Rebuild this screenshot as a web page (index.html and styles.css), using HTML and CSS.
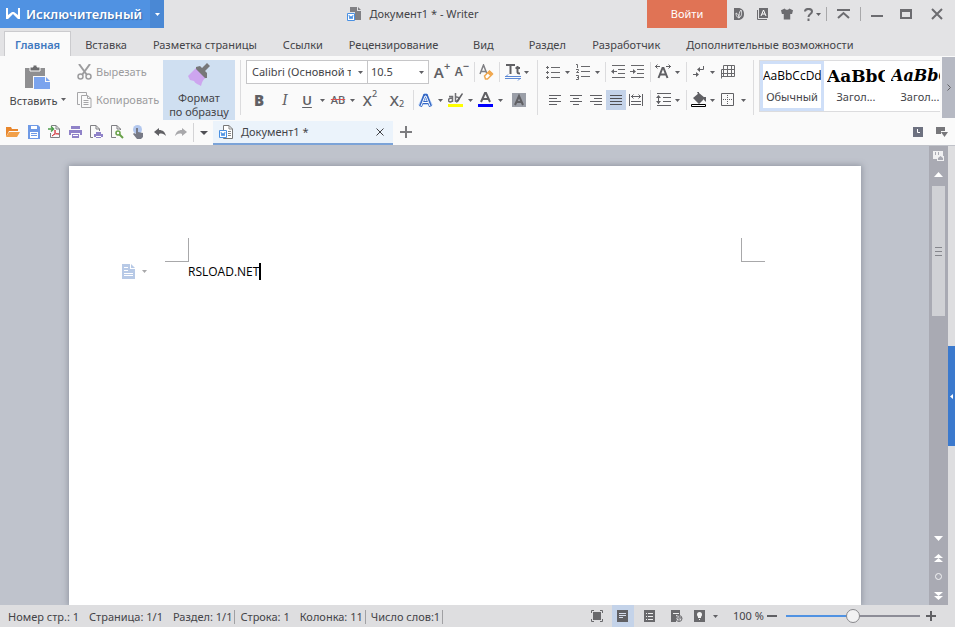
FILE: index.html
```html
<!DOCTYPE html>
<html lang="ru">
<head>
<meta charset="utf-8">
<title>Документ1 * - Writer</title>
<link rel="stylesheet" href="styles.css">
</head>
<body>
<svg class="sprite" aria-hidden="true">
  <symbol id="caret" viewBox="0 0 5 3"><path d="M0 0h5L2.500 3z"/></symbol>
  <symbol id="doc-w" viewBox="0 0 14 14"><path d="M4.500.5H10L13.500 4v9.500H4.500z" fill="#fff" stroke="#777"/><path d="M10 .5V4h3.500M9 6.500h3M9 8.500h3M9 10.500h3" stroke="#888" fill="none"/><path d="M.5 5.500h7v7h-7z" fill="#fff" stroke="#4a90e2"/><path d="M2 7l1 4 1-3 1 3 1-4" stroke="#4a90e2" fill="none"/></symbol>
</svg>

<header class="titlebar">
  <div class="brand">
    <button class="brand-main"><svg width="16" height="12" viewBox="0 0 16 12"><path d="M1 0h2v7l4-3h2l4 3V0h2v11h-2L8 6l-5 5H1z" fill="#fff"/></svg>Исключительный</button>
    <button class="brand-more" aria-label="Меню"><svg class="caret"><use href="#caret"/></svg></button>
  </div>
  <div class="doc-title">
    <svg width="15" height="14" viewBox="0 0 15 14"><path d="M3 0h7v4h4v9H8V5H3z" fill="#808084"/><path d="M11 0l3 3h-3z" fill="#808084"/><path d="M.5 6.500h7v7h-7z" fill="#fff" stroke="#4a90e2"/><path d="M2 8l1 4 1-3 1 3 1-4" stroke="#4a90e2" fill="none"/></svg>
    <span>Документ1 * - Writer</span>
  </div>
  <button class="login">Войти</button>
  <div class="window-tools">
    <button aria-label="Docer"><svg width="10" height="12" viewBox="0 0 10 12"><path d="M0 0h4c4 0 6 2.500 6 6s-2 6-6 6H0z" fill="#6c6c70"/><path d="M5 10C2 9 2 6 2 5c2 1 3 2 3 5 0-3 0-6 2-8 1 3 1 6-2 8" fill="none" stroke="#e3e3e5"/></svg></button>
    <button aria-label="Шрифты"><svg width="12" height="12" viewBox="0 0 12 12"><path d="M2 0h9v10H2z" fill="#6c6c70"/><path d="M.5 2v9.500H10" fill="none" stroke="#6c6c70"/><path d="M4 8l2.500-6L9 8M5 6h3" fill="none" stroke="#fff"/></svg></button>
    <button aria-label="Оформление"><svg width="12" height="12" viewBox="0 0 13 12"><path d="M4 0c1 2 4 2 5 0l4 2-1 4h-2v6H3V6H1L0 2z" fill="#6c6c70"/></svg></button>
    <button class="help" aria-label="Справка"><svg width="9" height="13" viewBox="0 0 9 13"><path d="M1 3.500C1 0 8 0 8 3.500 8 6 4.500 6 4.500 9" fill="none" stroke="#6c6c70" stroke-width="2"/><path d="M3.500 10.500h2V13h-2z" fill="#6c6c70"/></svg><svg class="caret"><use href="#caret"/></svg></button>
    <i class="bar"></i>
    <button aria-label="Свернуть ленту"><svg width="13" height="10" viewBox="0 0 13 10"><path d="M0 1h13M1 9l5.500-5L12 9" fill="none" stroke="#6c6c70" stroke-width="2"/></svg></button>
    <i class="bar"></i>
    <button aria-label="Свернуть"><svg width="12" height="10" viewBox="0 0 12 10"><path d="M0 7h12" stroke="#6c6c70" stroke-width="2"/></svg></button>
    <button aria-label="Развернуть"><svg width="12" height="10" viewBox="0 0 12 10"><path d="M1 1h10v8H1z" fill="none" stroke="#6c6c70" stroke-width="2"/><path d="M0 0h12v3H0z" fill="#6c6c70"/></svg></button>
    <button aria-label="Закрыть"><svg width="12" height="12" viewBox="0 0 12 12"><path d="M1 1l10 10M11 1L1 11" stroke="#6c6c70" stroke-width="2"/></svg></button>
  </div>
</header>

<nav class="tabs">
  <a class="tab active" href="#">Главная</a>
  <a class="tab" href="#">Вставка</a>
  <a class="tab" href="#">Разметка страницы</a>
  <a class="tab" href="#">Ссылки</a>
  <a class="tab" href="#">Рецензирование</a>
  <a class="tab" href="#">Вид</a>
  <a class="tab" href="#">Раздел</a>
  <a class="tab" href="#">Разработчик</a>
  <a class="tab" href="#">Дополнительные возможности</a>
</nav>

<section class="ribbon">
  <button class="paste">
    <svg width="26" height="24" viewBox="0 0 26 24"><path d="M0 3h20v8H8v12H0z" fill="#8f8f91"/><path d="M5 2h3V0h4v2h3v4H5z" fill="#6c6c6e" stroke="#fafafa"/><path d="M9 12h11v5h5v7H9z" fill="#7ba4ee"/><path d="M21 12l4 4h-4z" fill="#7ba4ee"/></svg>
    <span>Вставить <svg class="caret"><use href="#caret"/></svg></span>
  </button>
  <div class="clip">
    <button disabled><svg width="15" height="16" viewBox="0 0 15 16"><path d="M2 0l8 11M13 0L5 11" stroke="#9c9c9e" stroke-width="2"/><circle cx="3.500" cy="12.500" r="2.500" fill="none" stroke="#9c9c9e" stroke-width="1.500"/><circle cx="11.500" cy="12.500" r="2.500" fill="none" stroke="#9c9c9e" stroke-width="1.500"/></svg>Вырезать</button>
    <button disabled><svg width="15" height="16" viewBox="0 0 15 16"><path d="M3 12.500H.5V.5h9V3M4.500 3.500h6l3.500 3v9H4.500zM10.500 3.500v3H14M6.500 8.500h5M6.500 10.500h5M6.500 12.500h5" fill="none" stroke="#a6a6a8"/></svg>Копировать</button>
  </div>
  <button class="painter">
    <svg width="24" height="24" viewBox="0 0 24 24"><path d="M1 13l8-8 10 10c-3 1-4 4-5 8-5-3-5-2-7-5l-4-1z" fill="#cda5ef"/><path d="M9 4l4-1 2 2 5-5 3 3-5 5 2 2v5h-2L9 6z" fill="#777779"/></svg>
    <span>Формат<br>по образцу</span>
  </button>
  <div class="rule"></div>

  <div class="group">
    <div class="row font-top">
      <label class="combo"><select aria-label="Шрифт"><option>Calibri (Основной текст)</option></select><svg class="caret"><use href="#caret"/></svg></label>
      <label class="combo size"><select aria-label="Размер"><option>10.5</option></select><svg class="caret"><use href="#caret"/></svg></label>
      <button class="letter" aria-label="Увеличить шрифт">A<sup>+</sup></button>
      <button class="letter small" aria-label="Уменьшить шрифт">A<sup>−</sup></button>
      <i class="sep"></i>
      <button aria-label="Очистить формат"><svg width="15" height="16" viewBox="0 0 15 16"><path d="M1 10L4.500 1 8 10M2 7.500h5" fill="none" stroke="#808084" stroke-width="1.500"/><path d="M5.500 12l5-5 3 3-5 5h-2z" fill="#fff" stroke="#f0a850" stroke-width="1.500"/><path d="M8 9l2.500-2.500 3.500 3L11.500 12z" fill="#f0a850"/></svg></button>
      <i class="sep"></i>
      <button aria-label="Текстовые эффекты"><svg width="16" height="17" viewBox="0 0 16 17"><path d="M1 1h9M5.500 1v9M12.500 2v6c0 1 .5 1.500 2.500 1.500M10.500 4H15" fill="none" stroke="#606064" stroke-width="2"/><path d="M0 12.500h16M0 14.500h16M3 10.500l-2 2M13 16.500l2-2" fill="none" stroke="#5b88d6"/></svg></button>
      <button class="drop" aria-label="Ещё"><svg class="caret"><use href="#caret"/></svg></button>
    </div>
    <div class="row font-bottom">
      <button class="letter" aria-label="Полужирный"><b>B</b></button>
      <button class="letter italic" aria-label="Курсив">I</button>
      <button class="letter under" aria-label="Подчёркнутый">U</button>
      <button class="drop" aria-label="Ещё"><svg class="caret"><use href="#caret"/></svg></button>
      <button class="strike" aria-label="Зачёркнутый">AB</button>
      <button class="drop" aria-label="Ещё"><svg class="caret"><use href="#caret"/></svg></button>
      <button class="letter script" aria-label="Надстрочный">X<sup>2</sup></button>
      <button class="letter script" aria-label="Подстрочный">X<sub>2</sub></button>
      <i class="sep"></i>
      <button aria-label="Эффекты"><svg width="15" height="15" viewBox="0 0 15 15"><path d="M2 13L7.500 2 13 13M4 10h7" fill="none" stroke="#b6d0f8" stroke-width="4"/><path d="M2.500 13.500l4-11h2l4 11M5 9.500h5" fill="none" stroke="#3568c4" stroke-width="3"/><path d="M3 13L7 3h1l4 10M5 9.500h5" fill="none" stroke="#fff"/></svg></button>
      <button class="drop" aria-label="Ещё"><svg class="caret"><use href="#caret"/></svg></button>
      <button aria-label="Выделение"><svg width="15" height="16" viewBox="0 0 15 16"><path d="M1 4.500h3.500V10M4.500 6.500c-5-1-5 3.500-2 3.500l2-1M7.500 1v9M7.500 5c5-1 4 5 0 4" fill="none" stroke="#707074" stroke-width="1.500"/><path d="M15 2l-5 8-2 1 1-3 5-7z" fill="#606064"/><path d="M0 12h15v3H0z" fill="#ff0"/></svg></button>
      <button class="drop" aria-label="Ещё"><svg class="caret"><use href="#caret"/></svg></button>
      <button aria-label="Цвет текста"><svg width="15" height="16" viewBox="0 0 15 16"><path d="M3 10L7 1h1l4 9M4.500 7h6" fill="none" stroke="#606064" stroke-width="2"/><path d="M0 12h15v3H0z" fill="#00f"/></svg></button>
      <button class="drop" aria-label="Ещё"><svg class="caret"><use href="#caret"/></svg></button>
      <button aria-label="Заливка знаков"><svg width="14" height="14" viewBox="0 0 14 14"><path d="M0 0h14v14H0z" fill="#9b9fa8"/><path d="M3 12L7 3l4 9M4.500 9h5" fill="none" stroke="#606064" stroke-width="2"/></svg></button>
    </div>
  </div>
  <div class="rule"></div>

  <div class="group para">
    <div class="row para-top">
      <button aria-label="Маркеры"><svg width="14" height="14" viewBox="0 0 14 14"><path d="M5 2.500h9M5 7.500h9M5 12.500h9" stroke="#69696c"/><path d="M0 2.500h3M0 7.500h3M0 12.500h3M1.500 1v3M1.500 6v3M1.500 11v3" stroke="#69696c"/></svg></button>
      <button class="drop" aria-label="Ещё"><svg class="caret"><use href="#caret"/></svg></button>
      <button aria-label="Нумерация"><svg width="14" height="16" viewBox="0 0 14 16"><path d="M5 2.500h9M5 7.500h9M5 12.500h9M0 .5h1.500V4M0 5.500h2.500v1L.5 8.500H3M0 11.500h2.500v4H0M1 13.500h1" fill="none" stroke="#69696c"/></svg></button>
      <button class="drop" aria-label="Ещё"><svg class="caret"><use href="#caret"/></svg></button>
      <i class="sep"></i>
      <button aria-label="Уменьшить отступ"><svg width="14" height="14" viewBox="0 0 14 14"><path d="M1 .5h13M7 4.500h7M7 8.500h7M1 12.500h13M1 6.500h5" stroke="#69696c"/><path d="M0 6.500L3 4v5z" fill="#606064"/></svg></button>
      <button aria-label="Увеличить отступ"><svg width="14" height="14" viewBox="0 0 14 14"><path d="M1 .5h13M7 4.500h7M7 8.500h7M1 12.500h13M0 6.500h5" stroke="#69696c"/><path d="M6 6.500L3 4v5z" fill="#606064"/></svg></button>
      <i class="sep"></i>
      <button aria-label="Интервал знаков"><svg width="16" height="16" viewBox="0 0 16 16"><path d="M3.500 14L7.500 4h1l4 10M5 10.500h6" fill="none" stroke="#606064" stroke-width="2"/><path d="M0 2.500h5M11 2.500h5M2.500.5l-2 2 2 2M13.500.5l2 2-2 2" fill="none" stroke="#606064"/></svg></button>
      <button class="drop" aria-label="Ещё"><svg class="caret"><use href="#caret"/></svg></button>
      <i class="sep"></i>
      <button aria-label="Знаки абзаца"><svg width="12" height="14" viewBox="0 0 12 14"><path d="M10.500 1v3.500H5M0 9.500h5" fill="none" stroke="#606064"/><path d="M4 4.500L7 2v5zM6 9.500L3 7v5z" fill="#606064"/></svg></button>
      <button class="drop" aria-label="Ещё"><svg class="caret"><use href="#caret"/></svg></button>
      <button aria-label="Таблица"><svg width="14" height="14" viewBox="0 0 14 14"><path d="M2.500.5h11v11h-11zM2.500 4.500h11M0 8.500h13.500M6.500.5v11M10.500.5v11M2.500 4.500h-2v9M.5 11.500H3" fill="none" stroke="#69696c"/></svg></button>
    </div>
    <div class="row para-bottom">
      <button aria-label="По левому краю"><svg width="12" height="10" viewBox="0 0 12 10"><path d="M0 .5h12M0 3.500h8M0 6.500h12M0 9.500h8" stroke="#606064"/></svg></button>
      <button aria-label="По центру"><svg width="12" height="10" viewBox="0 0 12 10"><path d="M0 .5h12M3 3.500h6M0 6.500h12M3 9.500h6" stroke="#606064"/></svg></button>
      <button aria-label="По правому краю"><svg width="12" height="10" viewBox="0 0 12 10"><path d="M0 .5h12M4 3.500h8M0 6.500h12M4 9.500h8" stroke="#606064"/></svg></button>
      <button class="on" aria-label="По ширине"><svg width="12" height="10" viewBox="0 0 12 10"><path d="M0 .5h12M0 3.500h12M0 6.500h12M0 9.500h12" stroke="#505054"/></svg></button>
      <button aria-label="Распределить"><svg width="14" height="12" viewBox="0 0 14 12"><path d="M.5 0v12M13.500 0v12M2 2.500h10M2 7.500h10M2 10.500h10M4.500.5l-2 2 2 2M9.500.5l2 2-2 2" fill="none" stroke="#606064"/></svg></button>
      <i class="sep"></i>
      <button aria-label="Междустрочный интервал"><svg width="15" height="14" viewBox="0 0 15 14"><path d="M1 .5h14M7 4.500h8M7 8.500h8M1 12.500h14M2.500 3v8" stroke="#606064"/><path d="M0 5l2.500-3L5 5zM0 8h5l-2.500 3z" fill="#606064"/></svg></button>
      <button class="drop" aria-label="Ещё"><svg class="caret"><use href="#caret"/></svg></button>
      <i class="sep"></i>
      <button aria-label="Заливка"><svg width="16" height="16" viewBox="0 0 16 16"><path d="M2 6l6-5 6 5-6 6zM6 0h2v4M13 5h2v5l-2-2z" fill="#606064"/><path d="M.5 12.500h14v2H.5z" fill="#fff" stroke="#000"/></svg></button>
      <button class="drop" aria-label="Ещё"><svg class="caret"><use href="#caret"/></svg></button>
      <button aria-label="Границы"><svg width="14" height="14" viewBox="0 0 14 14"><path d="M.5.5h12v12H.5z" fill="none" stroke="#606064"/><path d="M6.500 2v10M2 6.500h10" stroke="#606064" stroke-dasharray="1 1"/></svg></button>
      <button class="drop" aria-label="Ещё"><svg class="caret"><use href="#caret"/></svg></button>
    </div>
  </div>
  <div class="rule"></div>

  <div class="gallery">
    <button class="style chosen"><span class="sample">AaBbCcDd</span><span>Обычный</span></button>
    <button class="style"><span class="sample head">AaBbC</span><span>Загол...</span></button>
    <button class="style"><span class="sample head slant">AaBbC</span><span>Загол...</span></button>
  </div>
  <button class="ribbon-next" aria-label="Далее"><svg width="4" height="7" viewBox="0 0 4 7"><path d="M.5.5l3 3-3 3" fill="none" stroke="#606064"/></svg></button>
</section>

<section class="docbar">
  <div class="quick">
    <button aria-label="Открыть"><svg width="14" height="12" viewBox="0 0 14 12"><path d="M0 1h5l1 2h6v2H3L0 11z" fill="#e8862c"/><path d="M3 6h11l-3 5H0z" fill="#f2a049"/></svg></button>
    <button aria-label="Сохранить"><svg width="13" height="14" viewBox="0 0 13 14"><path d="M1 0h10l2 2v12H1z" fill="#6f9ae6"/><path d="M4 1h6v3H4zM3 7h8v6H3z" fill="#fff"/><path d="M4 8.500h6M4 10.500h6" stroke="#6f9ae6"/></svg></button>
    <button aria-label="PDF"><svg width="13" height="14" viewBox="0 0 13 14"><path d="M3.500 2V.5H8L11.500 4v8.500h-9V8M8 .5V4h3.500" fill="none" stroke="#808084"/><path d="M0 4h5M3 1.500L5.500 4 3 6.500" fill="none" stroke="#4b9b49" stroke-width="1.500"/><path d="M4 11c3-2 3-3 3-6 0 4 1 4 4 4-2-1-5 0-7 2z" fill="none" stroke="#d9434a"/></svg></button>
    <button aria-label="Печать"><svg width="13" height="12" viewBox="0 0 13 12"><path d="M2 0h9v3H2zM0 4h13v5h-2V7H2v2H0zM3 8h7v4H3z" fill="#8f82c8"/><path d="M4 9.500h5" stroke="#fff"/></svg></button>
    <button aria-label="Прямая печать"><svg width="13" height="14" viewBox="0 0 13 14"><path d="M3 12.500H.5V.5H6L9.500 4v2M6 .5V4h3.500" fill="none" stroke="#808084"/><path d="M6 7h5v2h2v3h-2v1H6v-1H4V9h2z" fill="#8f82c8"/><path d="M6 11.500h5" stroke="#fff"/></svg></button>
    <button aria-label="Просмотр"><svg width="13" height="14" viewBox="0 0 13 14"><path d="M5 12.500H.5V.5H6L9.500 4v1M6 .5V4h3.500" fill="none" stroke="#808084"/><circle cx="7" cy="8" r="2" fill="none" stroke="#67a048" stroke-width="1.500"/><path d="M8.500 9.500L12 13" stroke="#67a048" stroke-width="2"/></svg></button>
    <button aria-label="Сенсорный режим"><svg width="11" height="14" viewBox="0 0 11 14"><circle cx="4.500" cy="4.500" r="4.500" fill="#b2c7ee"/><path d="M3 3h2v4l5 1v4l-2 2H4L0 9l1-1 2 1z" fill="#777a86"/></svg></button>
    <button aria-label="Отменить"><svg width="12" height="9" viewBox="0 0 12 9"><path d="M0 4l5-4v2c4 0 6 2 7 6-2-2-4-3-7-2v2z" fill="#606064"/></svg></button>
    <button aria-label="Повторить"><svg width="12" height="9" viewBox="0 0 12 9"><path d="M12 4L7 0v2C3 2 1 4 0 8c2-2 4-3 7-2v2z" fill="#a8a8ab"/></svg></button>
  </div>
  <button class="quick-more" aria-label="Настроить"><svg width="8" height="4" viewBox="0 0 8 4"><path d="M0 0h8L4 4z" fill="#505054"/></svg></button>
  <div class="doc-tab">
    <svg width="14" height="14"><use href="#doc-w"/></svg>
    <span>Документ1 *</span>
    <button aria-label="Закрыть документ"><svg width="8" height="8" viewBox="0 0 8 8"><path d="M.5.5l7 7M7.500.5l-7 7" stroke="#404044"/></svg></button>
  </div>
  <button class="new-doc" aria-label="Новый документ"><svg width="12" height="12" viewBox="0 0 12 12"><path d="M6 0v12M0 6h12" stroke="#7c7c7f" stroke-width="2"/></svg></button>
  <div class="docbar-end">
    <button aria-label="История"><svg width="10" height="10" viewBox="0 0 10 10"><path d="M0 0h10v10H0z" fill="#6d7180"/><path d="M4.500 2v3.500H7" fill="none" stroke="#fff"/></svg></button>
    <button aria-label="Окна"><svg width="12" height="10" viewBox="0 0 12 10"><path d="M0 0h9v4H5v3H0z" fill="#77777b"/><path d="M5 5h7L8.500 10z" fill="#77777b"/></svg></button>
  </div>
</section>

<main class="workspace">
  <div class="canvas">
    <article class="page">
      <div class="corners"><i class="corner left"></i><i class="corner right"></i></div>
      <div class="line">
        <button aria-label="Параметры абзаца"><svg width="13" height="15" viewBox="0 0 13 15"><path d="M0 0h8v5h5v10H0z" fill="#b7c9e6"/><path d="M9 0l4 4H9z" fill="#b7c9e6"/><path d="M2 3.500h4M2 6.500h4M2 9.500h9M2 11.500h9" stroke="#fff"/></svg><svg class="caret"><use href="#caret"/></svg></button>
        <p>RSLOAD.NET</p><i class="cursor"></i>
      </div>
    </article>
  </div>
  <div class="scroll">
    <button aria-label="Линейка"><svg width="11" height="10" viewBox="0 0 11 10"><path d="M0 0h10v5h1v5H4V8H0z" fill="#f0f0f2"/><path d="M2.500 1v3M5.500 1v3" stroke="#a9aab3"/><path d="M5 7l2.500-2L10 7v2H5z" fill="#a9aab3"/></svg></button>
    <button aria-label="Вверх"><svg width="9" height="5" viewBox="0 0 9 5"><path d="M0 5h9L4.500 0z" fill="#fff"/></svg></button>
    <div class="track"><div class="thumb"><i></i><i></i><i></i></div></div>
    <button aria-label="Вниз"><svg width="9" height="5" viewBox="0 0 9 5"><path d="M0 0h9L4.500 5z" fill="#fff"/></svg></button>
    <button aria-label="Предыдущая страница"><svg width="9" height="8" viewBox="0 0 9 8"><path d="M0 4h9L4.500 0zM0 8h9L4.500 4z" fill="#fff"/></svg></button>
    <button aria-label="Объект перехода"><svg width="7" height="7" viewBox="0 0 7 7"><circle cx="3.500" cy="3.500" r="3" fill="none" stroke="#f2f2f4"/></svg></button>
    <button aria-label="Следующая страница"><svg width="9" height="8" viewBox="0 0 9 8"><path d="M0 0h9L4.500 4zM0 4h9L4.500 8z" fill="#fff"/></svg></button>
  </div>
  <aside class="side"><button aria-label="Панель задач"><svg width="3" height="5" viewBox="0 0 3 5"><path d="M3 0v5L0 2.500z" fill="#fff"/></svg></button></aside>
</main>

<footer class="status">
  <div class="facts">
    <span>Номер стр.: 1</span><span>Страница: 1/1</span><span class="end">Раздел: 1/1</span><span>Строка: 1</span><span class="end">Колонка: 11</span><span class="end">Число слов:1</span>
  </div>
  <div class="views">
    <button aria-label="Полный экран"><svg width="12" height="12" viewBox="0 0 12 12"><path d="M2 2h8v8H2z" fill="#69696c"/><path d="M.5 3V.5H3M9 .5h2.500V3M11.500 9v2.500H9M3 11.500H.5V9" fill="none" stroke="#69696c"/></svg></button>
    <button class="on" aria-label="Разметка"><svg width="12" height="12" viewBox="0 0 12 12"><path d="M0 0h11v12H0z" fill="#606064"/><path d="M2 3.500h7M2 5.500h7M2 7.500h4" stroke="#d5dceb"/></svg></button>
    <button aria-label="Структура"><svg width="12" height="12" viewBox="0 0 12 12"><path d="M0 0h11v12H0z" fill="#69696c"/><path d="M2 3.500h1M4 3.500h5M2 6.500h1M4 6.500h5M2 9.500h1M4 9.500h5" stroke="#eee"/></svg></button>
    <button aria-label="Веб-документ"><svg width="12" height="12" viewBox="0 0 12 12"><path d="M0 0h9v5H5v7H0z" fill="#69696c"/><path d="M2 3.500h6" stroke="#eee"/><circle cx="8" cy="8.500" r="3" fill="#dedee0" stroke="#69696c"/><path d="M6 8h2v3M8 6l1 2h2" fill="none" stroke="#69696c"/></svg></button>
    <button aria-label="Защита глаз"><svg width="12" height="12" viewBox="0 0 12 12"><path d="M0 0h11v12H0z" fill="#69696c"/><circle cx="5.500" cy="4.500" r="2.500" fill="#f4f4f4"/><path d="M4 6h3v2H4zM5 9h1v1H5z" fill="#f4f4f4"/></svg></button>
    <button class="drop" aria-label="Ещё"><svg class="caret"><use href="#caret"/></svg></button>
  </div>
  <label class="zoom-label" for="zoom">100 %</label>
  <button class="step" aria-label="Уменьшить"><svg width="10" height="10" viewBox="0 0 10 10"><path d="M0 5h10" stroke="#606064" stroke-width="2"/></svg></button>
  <input id="zoom" type="range" min="0" max="100" value="50">
  <button class="step" aria-label="Увеличить"><svg width="10" height="10" viewBox="0 0 10 10"><path d="M0 5h10M5 0v10" stroke="#606064" stroke-width="2"/></svg></button>
</footer>
</body>
</html>
```
FILE: styles.css
```css
* { box-sizing: border-box; }
html, body { height: 100%; }
body {
  margin: 0;
  display: flex;
  flex-direction: column;
  overflow: hidden;
  background: #e3e3e5;
  color: #444448;
  font: 11px/16px "Noto Sans", "Open Sans", sans-serif;
}
button {
  display: flex;
  align-items: center;
  justify-content: center;
  margin: 0;
  padding: 0;
  border: 0;
  background: none;
  color: inherit;
  font: inherit;
}
svg { flex: none; display: block; }
.sprite { position: absolute; width: 0; height: 0; }
.caret { width: 5px; height: 3px; fill: #606064; }

/* Title bar */
.titlebar {
  display: grid;
  grid-template-columns: 164px 1fr 80px 228px;
  height: 28px;
  flex: none;
}
.brand { display: flex; }
.brand-main {
  flex: 1;
  justify-content: flex-start;
  gap: 5px;
  padding-left: 5px;
  background: #5092e2;
  color: #fff;
  font-size: 13px;
  font-weight: 600;
  text-shadow: 1px 1px 1px #3568a8;
}
.brand-more { width: 14px; background: #4a88d4; }
.brand-more .caret { fill: #fff; }
.doc-title {
  display: flex;
  align-items: center;
  justify-content: center;
  gap: 7px;
  padding-left: 15px;
}
.login { background: #e07355; color: #fff; }
.window-tools {
  display: grid;
  grid-template-columns: 24px 24px 24px 27px 1px 33px 1px 32px 26px 1fr;
  align-items: center;
}
.help { gap: 3px; }
.bar { height: 14px; background: #a8a8aa; }

/* Tabs */
.tabs {
  display: flex;
  height: 28px;
  padding: 3px 4px 0;
  flex: none;
}
.tab {
  min-width: 64px;
  padding: 6px 13px 0;
  color: #444448;
  text-align: center;
  text-decoration: none;
  white-space: nowrap;
}
.tab.active {
  min-width: 67px;
  margin-right: 1px;
  padding: 5px 10px 0;
  border: 1px solid #cbcbce;
  border-bottom: 0;
  background: #fafafa;
  color: #3f78c0;
  font-weight: 600;
}

/* Ribbon */
.ribbon {
  display: flex;
  flex: none;
  height: 65px;
  padding-top: 4px;
  background: #fafafa;
}
.paste {
  flex-direction: column;
  justify-content: flex-start;
  gap: 4px;
  width: 76px;
  padding-top: 5px;
}
.paste span { display: flex; gap: 4px; }
.paste .caret { margin-top: 5px; }
.clip { display: flex; flex-direction: column; gap: 12px; width: 87px; padding-top: 4px; }
.clip button { justify-content: flex-start; gap: 4px; padding-left: 1px; color: #9c9c9e; white-space: nowrap; }
.painter {
  flex-direction: column;
  justify-content: flex-start;
  width: 72px;
  height: 60px;
  padding-top: 3px;
  gap: 4px;
  background: #cfdff1;
  line-height: 14px;
}
.rule { width: 1px; height: 55px; background: #dcdcde; }
.painter + .rule { margin: 0 5px; }
.group { display: flex; flex-direction: column; gap: 4px; }
.group + .rule { margin-left: 4px; }
.row { display: grid; height: 24px; align-items: center; }
.row > button { height: 20px; }
.font-top { grid-template-columns: 122px 61px 26px 14px 10px 15px 10px 18px 9px; }
.font-bottom { grid-template-columns: 26px 26px 18px 12px 20px 8px 28px 26px 6px 19px 10px 21px 9px 21px 9px 28px; }
.para { margin-left: 6px; }
.para-top { grid-template-columns: 18px 11px 20px 9px 7px 18px 20px 6px 20px 9px 8px 18px 9px 22px; }
.para-bottom { grid-template-columns: 22px 20px 20px 20px 20px 8px 19px 9px 8px 18px 9px 22px 8px; }
.para + .rule { margin: 0 5px 0 6px; }
.sep { width: 1px; height: 20px; justify-self: center; background: #dcdcde; }
.combo {
  position: relative;
  display: flex;
  height: 24px;
  border: 1px solid #c6c6c8;
  background: #fff;
}
.combo.size { border-left: 0; }
.combo select {
  width: 100%;
  padding: 0 16px 0 5px;
  appearance: none;
  border: 0;
  background: none;
  color: #444448;
  font: inherit;
  text-overflow: clip;
}
.combo.size select { padding-left: 3px; }
.combo .caret { position: absolute; right: 4px; top: 10px; }
.letter { font-size: 15px; font-weight: 600; color: #606064; }
.letter sup { align-self: flex-start; font-size: 11px; line-height: 8px; }
.letter.small { font-size: 12px; }
.letter.italic { font-family: "DejaVu Serif", serif; font-size: 14px; font-style: italic; font-weight: normal; }
.letter.under { font-size: 13px; text-decoration: underline; text-underline-offset: 2px; }
.letter.script { font-weight: 500; }
.letter.script sup, .letter.script sub { font-size: 9px; }
.letter.script sub { align-self: flex-end; line-height: 12px; }
.strike { color: #606064; font-weight: 500; text-decoration: line-through #e05050; }
.row .on { background: #c4d3e9; }
.gallery {
  display: flex;
  flex: 1;
  height: 52px;
  min-width: 0;
  overflow: hidden;
  border: 1px solid #dcdcde;
  border-right: 0;
  background: #fff;
}
.style {
  display: flex;
  flex: none;
  flex-direction: column;
  justify-content: flex-start;
  gap: 3px;
  width: 64px;
  padding: 5px 3px 0;
  overflow: hidden;
}
.style.chosen { border: 3px solid #cfdff8; padding: 2px 0 0; }
.sample {
  width: 100%;
  overflow: hidden;
  color: #000;
  font: 12px/20px "Open Sans", sans-serif;
  text-align: left;
}
.sample.head { font: bold 17px/20px "DejaVu Serif", serif; }
.sample.slant { font-size: 16px; font-style: italic; }
.ribbon-next { width: 13px; height: 61px; margin: -3px 0 0 2px; background: #b6b9c3; }

/* Quick access and document tabs */
.docbar {
  display: flex;
  flex: none;
  height: 25px;
  border-bottom: 1px solid #c0c2c9;
  background: #fafafa;
}
.quick { display: grid; grid-template-columns: repeat(9, 21px); padding: 0 2px 2px 2px; }
.quick-more { width: 20px; border-left: 1px solid #d4d4d6; margin: 2px 0 3px; }
.doc-tab {
  display: flex;
  align-items: center;
  gap: 8px;
  width: 180px;
  padding: 0 9px 0 6px;
  border-bottom: 2px solid #7ba3d8;
  background: #ebf3fb;
}
.doc-tab button { margin-left: auto; }
.new-doc { width: 26px; padding-bottom: 2px; }
.docbar-end { display: flex; gap: 13px; margin-left: auto; padding: 0 7px 2px; }

/* Workspace */
.workspace { display: flex; flex: 1; min-height: 0; }
.canvas { flex: 1; padding: 20px 68px 0 69px; overflow: hidden; background: #bfc3cc; }
.page {
  height: 100%;
  padding-top: 72px;
  background: #fff;
  box-shadow: 0 0 6px 1px #9296a2;
}
.corners { display: flex; justify-content: space-between; padding: 0 96px; }
.corner { width: 24px; height: 24px; border-bottom: 1px solid #a8a8aa; }
.corner.left { border-right: 1px solid #a8a8aa; }
.corner.right { border-left: 1px solid #a8a8aa; }
.line { display: flex; align-items: center; height: 19px; padding-left: 53px; }
.line button { justify-content: flex-start; gap: 7px; width: 66px; }
.line .caret { fill: #a8a8aa; }
.line p { margin: 0; color: #000; font: 12px/18px "Open Sans", sans-serif; }
.cursor { width: 2px; height: 17px; background: #000; }
.scroll { display: flex; flex-direction: column; width: 19px; background: #a9aab3; }
.scroll button { height: 19px; }
.track { flex: 1; padding: 2px 3px 0; }
.thumb {
  display: flex;
  flex-direction: column;
  align-items: center;
  justify-content: center;
  gap: 3px;
  height: 38%;
  background: #d0d1d5;
}
.thumb i { width: 7px; height: 1px; background: #85868c; }
.side { width: 7px; padding-top: 200px; background: #dedee0; }
.side button { width: 7px; height: 100px; background: #3b79cd; }

/* Status bar */
.status { display: flex; flex: none; align-items: center; height: 22px; padding-right: 18px; background: #dedee0; }
.facts { display: flex; flex: 1; align-items: center; padding: 2px 0 0 8px; white-space: nowrap; }
.facts span { margin-right: 10px; }
.facts .end { margin-right: 5px; padding-right: 2px; border-right: 1px solid #a0a0a3; line-height: 14px; }
.views { display: grid; grid-template-columns: 30px 22px 32px 22px 24px 6px; height: 22px; }
.views .on { background: #c4d3e9; }
.zoom-label { width: 43px; padding-left: 15px; white-space: nowrap; }
.step { width: 22px; }
.step:last-child { width: 12px; }
.status input {
  width: 134px;
  height: 14px;
  margin: 0 5px 0 3px;
  appearance: none;
  background: linear-gradient(90deg, #5092e2 50%, #8c8c96 50%) center / 100% 2px no-repeat;
}
.status input::-webkit-slider-thumb {
  appearance: none;
  width: 14px;
  height: 14px;
  border: 1px solid #88888c;
  border-radius: 50%;
  background: #f2f2f3;
}
```
